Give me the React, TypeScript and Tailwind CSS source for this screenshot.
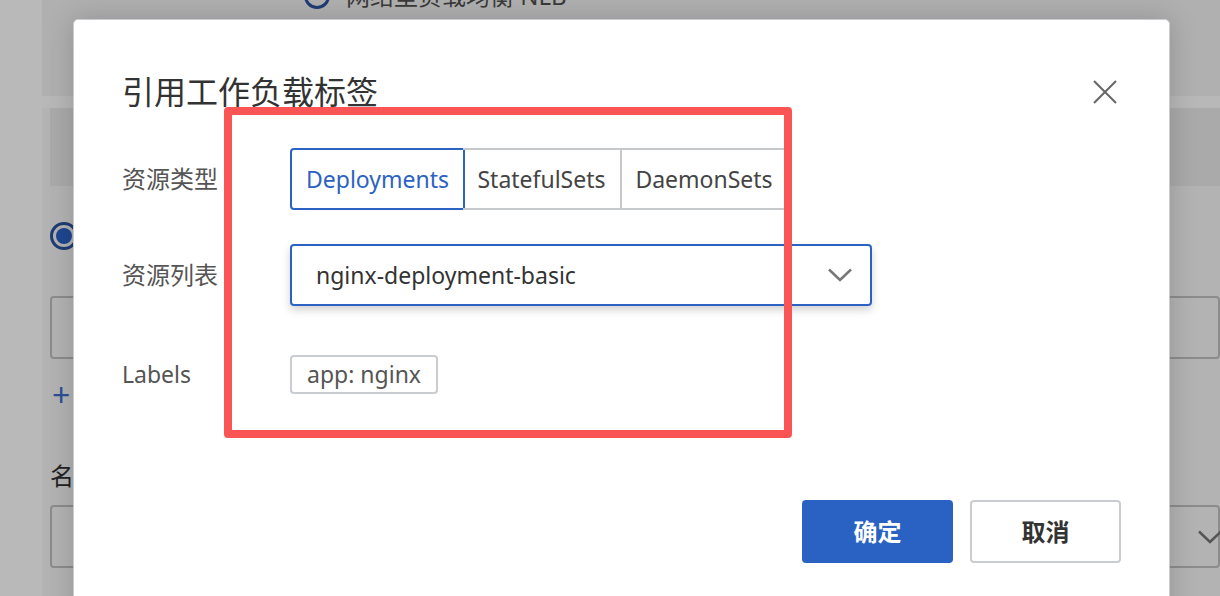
const font = { fontFamily: '"Noto Sans", "Noto Sans CJK SC", sans-serif' }

const CloseIcon = () => (
  <svg width="24" height="24" viewBox="0 0 24 24" fill="none" stroke="#666" strokeWidth="2">
    <path d="M1 1L23 23M23 1L1 23" />
  </svg>
)

const Chevron = ({ color = "#777" }: { color?: string }) => (
  <svg width="24" height="14" viewBox="0 0 24 14" fill="none" stroke={color} strokeWidth="2.5">
    <path d="M1 1.5L12 12L23 1.5" />
  </svg>
)

const Background = () => (
  <div className="flex h-full">
    <div className="w-[42px] shrink-0 bg-[#b9b9b9]" />
    <div className="flex flex-1 flex-col bg-[#b3b3b3]">
      <div className="flex h-[96px] flex-col bg-[#b0b0b0]">
        <div className="-mt-[22px] flex items-center gap-[16px] pl-[262px] text-[24px] text-[#3a3a3a]">
          <span className="h-[26px] w-[26px] rounded-full border-[3px] border-[#1f3d73]" />
          <span>网络型负载均衡 NLB</span>
        </div>
      </div>
      <div className="h-[12px] bg-[#b8b8b8]" />
      <div className="ml-[8px] h-[78px] bg-[#aaaaaa]" />
      <div className="pl-[8px] pt-[36px]">
        <span className="flex h-[28px] w-[28px] items-center justify-center rounded-full border-[3px] border-[#1f3d73]">
          <span className="h-[16px] w-[16px] rounded-full bg-[#1f4690]" />
        </span>
      </div>
      <div className="ml-[8px] mt-[46px] h-[63px] shrink-0 rounded-[4px] border-2 border-[#8c8c8c]" />
      <div className="pl-[10px] pt-[20px] text-[32px] leading-[32px] text-[#2d4f94]">+</div>
      <div className="pl-[8px] pt-[50px] text-[24px] leading-[30px] text-[#222]">名称</div>
      <div className="ml-[8px] mt-[14px] flex h-[63px] shrink-0 items-center justify-end rounded-[4px] border-2 border-[#8c8c8c]">
        <span className="-mr-[4px]"><Chevron color="#555" /></span>
      </div>
    </div>
  </div>
)

const App = () => {
  return (
    <div className="relative h-[596px] w-[1220px] overflow-hidden" style={font}>
      <Background />

      <div className="absolute left-[73px] top-[19px] h-[640px] w-[1097px] rounded-[5px] border border-[#c9cdd1] bg-white px-[48px] pt-[52px] shadow-[0_0_28px_rgba(0,0,0,0.18)]">
        <div className="flex items-center justify-between">
          <h2 className="text-[32px] leading-[40px] text-[#333]">引用工作负载标签</h2>
          <span className="mr-[4px]"><CloseIcon /></span>
        </div>

        <div className="mt-[36px] flex items-center">
          <div className="w-[168px] text-[24px] text-[#555]">资源类型</div>
          <div className="flex h-[62px] text-[23px]">
            <button className="w-[175px] rounded-l-[4px] border-2 border-[#2b62c3] text-[#2b62c3]">Deployments</button>
            <button className="-ml-[2px] w-[159px] border-2 border-l-0 border-[#c6c9cc] text-[#444]">StatefulSets</button>
            <button className="w-[166px] rounded-r-[4px] border-2 border-l-0 border-[#c6c9cc] text-[#444]">DaemonSets</button>
          </div>
        </div>

        <div className="mt-[34px] flex items-center">
          <div className="w-[168px] text-[24px] text-[#555]">资源列表</div>
          <div className="flex h-[62px] w-[582px] items-center justify-between rounded-[4px] border-2 border-[#2b62c3] pl-[24px] pr-[18px] text-[23px] text-[#333] shadow-[0_4px_8px_rgba(0,0,0,0.18)]">
            <span>nginx-deployment-basic</span>
            <Chevron />
          </div>
        </div>

        <div className="mt-[49px] flex items-center">
          <div className="w-[168px] text-[23px] text-[#555]">Labels</div>
          <span className="flex h-[39px] items-center rounded-[4px] border-2 border-[#c9ccd0] px-[15px] text-[23px] text-[#555]">app: nginx</span>
        </div>

        <div className="mt-[106px] flex justify-end gap-[17px]">
          <button className="h-[63px] w-[151px] rounded-[4px] bg-[#2a62c3] text-[24px] font-bold text-white">确定</button>
          <button className="h-[63px] w-[151px] rounded-[4px] border-2 border-[#c9ccd0] bg-white text-[24px] font-bold text-[#333]">取消</button>
        </div>
      </div>

      <div className="absolute left-[224px] top-[107px] h-[331px] w-[568px] rounded-[4px] border-[8px] border-[#fa5454]" />
    </div>
  )
}

export default App
